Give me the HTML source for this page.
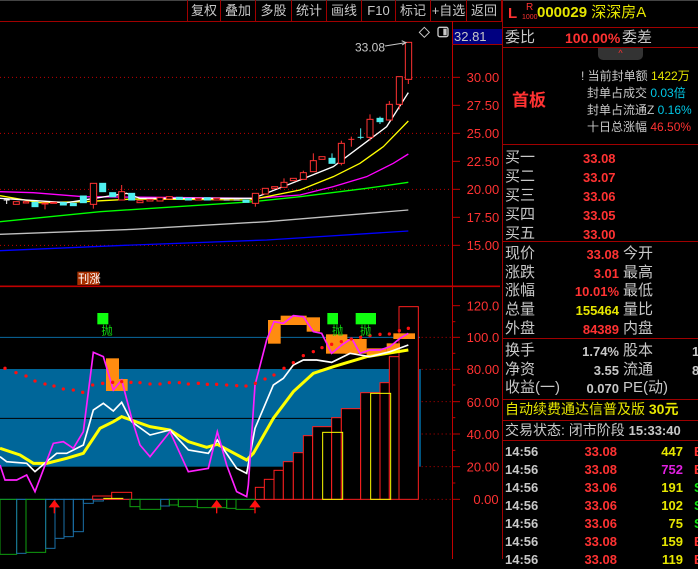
<!DOCTYPE html>
<html><head><meta charset="utf-8"><style>
*{margin:0;padding:0;box-sizing:border-box}
body{width:698px;height:559px;background:#000;overflow:hidden;position:relative;font-family:"Liberation Sans","Noto Sans CJK SC",sans-serif;color:#c8c8c8}
.a{position:absolute;white-space:nowrap;line-height:1}
.btn{position:absolute;top:0;height:21px;border-right:1px solid #a00000;font-size:13px;color:#c8c8c8;text-align:center;line-height:22px}
.r{color:#ff3232}.y{color:#e6e600}.c{color:#00c8e6}.w{color:#c8c8c8}
.hl{position:absolute;height:1px;background:#a00000}
.p14{font-size:15px}
.b{font-weight:bold}
</style></head><body>
<div class="hl" style="left:0;top:0;width:698px;background:#444"></div>
<div class="btn" style="left:187px;width:34px;border-left:1px solid #a00000">复权</div>
<div class="btn" style="left:221px;width:35px">叠加</div>
<div class="btn" style="left:256px;width:36px">多股</div>
<div class="btn" style="left:292px;width:35px">统计</div>
<div class="btn" style="left:327px;width:35px">画线</div>
<div class="btn" style="left:362px;width:34px">F10</div>
<div class="btn" style="left:396px;width:35px">标记</div>
<div class="btn" style="left:431px;width:36px">+自选</div>
<div class="btn" style="left:467px;width:35px">返回</div>
<div class="hl" style="left:0;top:21px;width:502px"></div>
<div style="position:absolute;left:502px;top:0;width:1px;height:559px;background:#a00000"></div>
<div style="position:absolute;left:452px;top:21px;width:1px;height:538px;background:#c00000"></div>
<div style="position:absolute;left:453px;top:29px;width:49px;height:15px;background:#000080;color:#c8c8c8;font-size:13px;line-height:15px;padding-left:1px">32.81</div>
<div class="hl" style="left:452px;top:44px;width:50px"></div>

<svg style="position:absolute;left:0;top:20px" width="500" height="270" viewBox="0 0 1500 810">
<g stroke="#c00000" stroke-width="3" stroke-dasharray="3,9">
<line x1="0" y1="172" x2="1356" y2="172"/><line x1="0" y1="340" x2="1356" y2="340"/><line x1="0" y1="508" x2="1356" y2="508"/><line x1="0" y1="676" x2="1356" y2="676"/>
</g>
<g stroke="#c00000" stroke-width="3">
<line x1="1356" y1="172" x2="1380" y2="172"/><line x1="1356" y1="256" x2="1380" y2="256"/><line x1="1356" y1="340" x2="1380" y2="340"/><line x1="1356" y1="424" x2="1380" y2="424"/><line x1="1356" y1="508" x2="1380" y2="508"/><line x1="1356" y1="592" x2="1380" y2="592"/><line x1="1356" y1="676" x2="1380" y2="676"/>
<line x1="0" y1="800" x2="1500" y2="800"/>
</g>
<g fill="#ff3232" font-size="39" font-family="Liberation Sans,sans-serif">
<text x="1400" y="186">30.00</text><text x="1400" y="270">27.50</text><text x="1400" y="354">25.00</text><text x="1400" y="438">22.50</text><text x="1400" y="522">20.00</text><text x="1400" y="606">17.50</text><text x="1400" y="690">15.00</text>
</g>
<g fill="none" stroke-width="4">
<polyline stroke="#0000ff" points="0,692 400,675 800,660 1225,633"/>
<polyline stroke="#c0c0c0" points="0,643 400,628 800,605 1225,570"/>
<polyline stroke="#00ff00" points="0,605 300,575 760,545 900,530 1100,505 1225,487"/>
<polyline stroke="#ff00ff" points="0,515 100,518 250,530 760,535 900,525 1000,500 1100,470 1180,430 1225,402"/>
<polyline stroke="#ffff00" points="0,527 120,548 250,545 400,537 750,540 900,510 1000,470 1080,430 1150,380 1225,303"/>
<polyline stroke="#ffffff" points="0,535 200,548 380,520 420,535 760,535 900,480 1000,440 1100,365 1160,320 1225,218"/>
</g>
<g stroke-width="3">
<g stroke="#ff3232" fill="#000">
<rect x="40" y="545" width="18" height="8"/><rect x="70" y="545" width="16" height="4"/><line x1="135" y1="550" x2="135" y2="568"/><rect x="126" y="549" width="18" height="3"/><rect x="152" y="547" width="18" height="3"/>
<line x1="280" y1="553" x2="280" y2="566"/><rect x="271" y="490" width="19" height="63"/>
<line x1="365" y1="495" x2="365" y2="515"/><rect x="356" y="515" width="18" height="25"/>
<rect x="411" y="542" width="18" height="6"/><rect x="441" y="538" width="18" height="5"/><rect x="471" y="533" width="18" height="10"/><rect x="499" y="530" width="18" height="7"/><rect x="586" y="535" width="18" height="5"/><rect x="641" y="535" width="18" height="5"/>
<line x1="766" y1="550" x2="766" y2="560"/><rect x="757" y="520" width="19" height="30"/>
<rect x="787" y="505" width="18" height="17"/><rect x="815" y="500" width="18" height="5"/>
<line x1="852" y1="475" x2="852" y2="487"/><rect x="843" y="487" width="18" height="15"/>
<rect x="871" y="475" width="18" height="7"/><line x1="910" y1="452" x2="910" y2="458"/><rect x="901" y="458" width="18" height="20"/>
<line x1="940" y1="400" x2="940" y2="422"/><rect x="931" y="422" width="18" height="33"/>
<rect x="957" y="410" width="18" height="8"/>
<line x1="1024" y1="362" x2="1024" y2="436"/><rect x="1015" y="370" width="18" height="60"/>
<line x1="1054" y1="350" x2="1054" y2="380"/><line x1="1045" y1="358" x2="1063" y2="358"/>
<line x1="1110" y1="283" x2="1110" y2="362"/><rect x="1101" y="298" width="18" height="54"/>
<line x1="1168" y1="243" x2="1168" y2="253"/><rect x="1159" y="253" width="18" height="47"/>
<line x1="1198" y1="253" x2="1198" y2="268"/><rect x="1189" y="170" width="18" height="83"/>
<line x1="1225" y1="178" x2="1225" y2="192"/><rect x="1216" y="67" width="19" height="111"/>
</g>
<g stroke="#50f0f0" fill="#50f0f0">
<rect x="96" y="547" width="18" height="13"/><rect x="181" y="548" width="18" height="7"/><rect x="211" y="550" width="18" height="7"/><rect x="241" y="528" width="18" height="20"/><rect x="299" y="490" width="18" height="25"/><rect x="329" y="518" width="18" height="12"/><rect x="386" y="520" width="18" height="20"/><rect x="529" y="532" width="18" height="6"/><rect x="556" y="535" width="18" height="5"/><rect x="613" y="533" width="18" height="7"/><rect x="729" y="540" width="18" height="7"/>
<line x1="996" y1="400" x2="996" y2="430"/><rect x="987" y="415" width="18" height="15"/>
<line x1="1082" y1="325" x2="1082" y2="358"/><line x1="1073" y1="352" x2="1091" y2="352"/>
<line x1="1140" y1="290" x2="1140" y2="312"/><rect x="1131" y="295" width="18" height="10"/>
</g>
<g stroke="#fff"><line x1="11" y1="540" x2="29" y2="540"/><line x1="20" y1="540" x2="20" y2="552"/><line x1="671" y1="540" x2="689" y2="540"/><line x1="701" y1="540" x2="719" y2="540"/></g>
</g>
<text x="1065" y="95" fill="#c8c8c8" font-size="36" font-family="Liberation Sans,sans-serif">33.08</text>
<polyline points="1155,78 1218,68" stroke="#c8c8c8" stroke-width="3" fill="none"/><polyline points="1205,62 1218,68 1206,75" stroke="#c8c8c8" stroke-width="3" fill="none"/>
<path d="M1273,22 L1288,37 L1273,52 L1258,37 Z" fill="none" stroke="#c8c8c8" stroke-width="3"/>
<rect x="1314" y="22" width="30" height="28" rx="5" fill="none" stroke="#c8c8c8" stroke-width="4"/><rect x="1330" y="26" width="10" height="20" fill="#c8c8c8"/>
<rect x="232" y="755" width="66" height="40" fill="#a83000"/>
<text x="234" y="788" fill="#fff" font-size="34" font-family="Noto Sans CJK SC,sans-serif">刊涨</text>
</svg>

<svg style="position:absolute;left:0;top:285px" width="500" height="274" viewBox="0 0 1500 822">
<rect x="0" y="252" width="1168" height="293" fill="#006699"/>
<line x1="0" y1="157" x2="1260" y2="157" stroke="#0a6aa0" stroke-width="3"/>
<line x1="0" y1="400" x2="1168" y2="400" stroke="#000" stroke-width="3"/>
<line x1="1260" y1="252" x2="1260" y2="545" stroke="#006699" stroke-width="5"/>
<line x1="0" y1="643" x2="800" y2="643" stroke="#0a6aa0" stroke-width="3"/>
<g stroke="#c00000" stroke-width="3" stroke-dasharray="3,9">
<line x1="1265" y1="157" x2="1356" y2="157"/><line x1="1265" y1="253" x2="1356" y2="253"/><line x1="1265" y1="350" x2="1356" y2="350"/><line x1="1265" y1="447" x2="1356" y2="447"/><line x1="1265" y1="545" x2="1356" y2="545"/><line x1="1265" y1="643" x2="1356" y2="643"/>
</g>
<line x1="0" y1="3" x2="1500" y2="3" stroke="#c00000" stroke-width="3"/>
<g stroke="#c00000" stroke-width="3">
<line x1="1356" y1="62" x2="1380" y2="62"/><line x1="1356" y1="157" x2="1380" y2="157"/><line x1="1356" y1="253" x2="1380" y2="253"/><line x1="1356" y1="350" x2="1380" y2="350"/><line x1="1356" y1="447" x2="1380" y2="447"/><line x1="1356" y1="545" x2="1380" y2="545"/><line x1="1356" y1="643" x2="1380" y2="643"/>
<line x1="1356" y1="110" x2="1366" y2="110"/><line x1="1356" y1="205" x2="1366" y2="205"/><line x1="1356" y1="300" x2="1366" y2="300"/><line x1="1356" y1="398" x2="1366" y2="398"/><line x1="1356" y1="496" x2="1366" y2="496"/><line x1="1356" y1="594" x2="1366" y2="594"/>
</g>
<g fill="#ff3232" font-size="39" font-family="Liberation Sans,sans-serif">
<text x="1400" y="76">120.0</text><text x="1400" y="171">100.0</text><text x="1400" y="267">80.00</text><text x="1400" y="366">60.00</text><text x="1400" y="462">40.00</text><text x="1400" y="559">20.00</text><text x="1420" y="657">0.00</text>
</g>
<g fill="#000" stroke="#ff2020" stroke-width="3">
<rect x="766" y="607" width="27" height="36"/><rect x="793" y="583" width="29" height="60"/><rect x="822" y="556" width="28" height="87"/><rect x="850" y="530" width="30" height="113"/><rect x="880" y="503" width="30" height="140"/><rect x="910" y="452" width="28" height="191"/><rect x="938" y="425" width="57" height="218"/><rect x="995" y="398" width="29" height="245"/><rect x="1024" y="371" width="58" height="272"/><rect x="1082" y="323" width="58" height="320"/><rect x="1140" y="293" width="28" height="350"/><rect x="1168" y="215" width="29" height="428"/><rect x="1197" y="65" width="58" height="578"/>
</g>
<g fill="none" stroke="#ffff00" stroke-width="3"><rect x="968" y="442" width="60" height="201"/><rect x="1112" y="325" width="60" height="318"/></g>
<g fill="none" stroke-width="3">
<rect x="0" y="643" width="50" height="165" stroke="#10a010"/><rect x="50" y="643" width="28" height="162" stroke="#1a70a8"/><rect x="78" y="643" width="59" height="159" stroke="#10a010"/>
<rect x="137" y="643" width="28" height="147" stroke="#1a70a8"/><rect x="165" y="643" width="27" height="117" stroke="#1a70a8"/><rect x="192" y="643" width="28" height="112" stroke="#1a70a8"/><rect x="220" y="643" width="30" height="97" stroke="#1a70a8"/><rect x="250" y="643" width="30" height="12" stroke="#1a70a8"/><rect x="280" y="643" width="30" height="5" stroke="#1a70a8"/>
<rect x="278" y="633" width="57" height="10" stroke="#ff2020"/><rect x="335" y="622" width="60" height="21" stroke="#ff2020"/><line x1="310" y1="640" x2="370" y2="640" stroke="#ffff00"/>
<rect x="390" y="643" width="30" height="22" stroke="#10a010"/><rect x="420" y="643" width="62" height="30" stroke="#10a010"/><rect x="482" y="643" width="26" height="20" stroke="#1a70a8"/><rect x="508" y="643" width="27" height="17" stroke="#10a010"/><rect x="535" y="643" width="57" height="22" stroke="#10a010"/><rect x="592" y="643" width="88" height="25" stroke="#10a010"/><rect x="680" y="643" width="28" height="27" stroke="#10a010"/><rect x="708" y="643" width="57" height="30" stroke="#10a010"/>
</g>
<g fill="#ff1010" stroke="#ff1010" stroke-width="4">
<path d="M150,665 L163,648 L176,665 Z"/><line x1="163" y1="660" x2="163" y2="685"/>
<path d="M637,665 L650,648 L663,665 Z"/><line x1="650" y1="660" x2="650" y2="685"/>
<path d="M752,665 L765,648 L778,665 Z"/><line x1="765" y1="660" x2="765" y2="685"/>
</g>
<g fill="#ff8c10">
<rect x="318" y="220" width="39" height="98"/><rect x="357" y="282" width="26" height="36"/>
<rect x="804" y="105" width="38" height="71"/><rect x="842" y="92" width="78" height="28"/><rect x="920" y="97" width="40" height="43"/><rect x="978" y="148" width="64" height="58"/><rect x="1035" y="162" width="65" height="44"/><rect x="1100" y="190" width="60" height="20"/><rect x="1160" y="175" width="40" height="25"/><rect x="1180" y="145" width="65" height="17"/>
</g>
<polyline fill="none" stroke="#ffff00" stroke-width="9" points="0,490 60,510 100,535 140,535 200,520 250,505 300,430 340,410 365,395 450,425 510,435 565,470 620,487 652,478 740,525 760,505 820,400 880,320 940,265 1000,245 1100,215 1225,195"/>
<polyline fill="none" stroke="#fff" stroke-width="5" points="0,515 20,530 80,535 105,560 140,530 170,505 200,505 250,480 280,375 310,355 340,378 365,352 395,410 450,450 510,435 565,495 625,505 652,465 710,550 740,565 765,430 820,300 850,280 880,240 910,225 950,225 995,232 1050,205 1110,215 1170,200 1225,180"/>
<polyline fill="none" stroke="#ff20ff" stroke-width="5" points="0,540 15,585 50,585 80,570 105,620 160,475 190,470 220,490 250,440 280,202 310,215 340,315 365,285 395,400 420,480 450,515 510,440 565,560 625,550 652,440 680,540 710,620 740,635 745,600 765,300 800,165 822,110 850,115 880,92 910,95 940,140 965,145 995,205 1025,180 1055,160 1080,205 1110,195 1140,195 1170,185 1200,160 1225,145"/>
<g fill="#ff1010">
<circle cx="15" cy="250" r="5"/><circle cx="48" cy="263" r="5"/><circle cx="78" cy="273" r="5"/><circle cx="105" cy="288" r="5"/><circle cx="135" cy="297" r="5"/><circle cx="162" cy="303" r="5"/><circle cx="190" cy="312" r="5"/><circle cx="220" cy="315" r="5"/><circle cx="248" cy="322" r="5"/><circle cx="278" cy="300" r="5"/><circle cx="308" cy="295" r="5"/><circle cx="338" cy="292" r="5"/><circle cx="365" cy="290" r="5"/><circle cx="393" cy="292" r="5"/><circle cx="420" cy="293" r="5"/><circle cx="450" cy="297" r="5"/><circle cx="480" cy="297" r="5"/><circle cx="508" cy="293" r="5"/><circle cx="538" cy="293" r="5"/><circle cx="565" cy="297" r="5"/><circle cx="595" cy="295" r="5"/><circle cx="622" cy="298" r="5"/><circle cx="650" cy="298" r="5"/><circle cx="680" cy="300" r="5"/><circle cx="710" cy="302" r="5"/><circle cx="738" cy="303" r="5"/><circle cx="766" cy="295" r="5"/><circle cx="795" cy="282" r="5"/><circle cx="822" cy="270" r="5"/><circle cx="852" cy="250" r="5"/><circle cx="880" cy="233" r="5"/><circle cx="910" cy="212" r="5"/><circle cx="940" cy="200" r="5"/><circle cx="966" cy="188" r="5"/><circle cx="995" cy="178" r="5"/><circle cx="1024" cy="170" r="5"/><circle cx="1054" cy="162" r="5"/><circle cx="1082" cy="157" r="5"/><circle cx="1110" cy="152" r="5"/><circle cx="1140" cy="148" r="5"/><circle cx="1168" cy="147" r="5"/><circle cx="1198" cy="137" r="5"/><circle cx="1225" cy="130" r="5"/>
</g>
<g fill="#10ff10"><rect x="292" y="84" width="33" height="34"/><rect x="982" y="84" width="32" height="34"/><rect x="1067" y="84" width="61" height="34"/></g>
<g fill="#10e010" font-size="34" font-family="Noto Sans CJK SC,sans-serif"><text x="304" y="148">抛</text><text x="996" y="148">抛</text><text x="1080" y="148">抛</text></g>
</svg>

<!-- right panel -->
<div class="a r b" style="left:508px;top:6px;font-size:15px">L</div>
<div class="a r" style="left:526px;top:3px;font-size:10px">R</div>
<div class="a r" style="left:522px;top:14px;font-size:7px">1000</div>
<div class="a y b" style="left:537px;top:5px;font-size:15px">000029 <span style="font-weight:normal">深深房A</span></div>
<div class="hl" style="left:502px;top:27px;width:196px"></div>
<div class="a w" style="left:505px;top:30px;font-size:15px">委比</div>
<div class="a r b" style="left:565px;top:31px;font-size:14px">100.00%</div>
<div class="a w" style="left:622px;top:30px;font-size:15px">委差</div>
<div class="hl" style="left:502px;top:47px;width:196px"></div>
<div style="position:absolute;left:598px;top:48px;width:45px;height:12px;background:#333;border-radius:0 0 5px 5px;color:#ff3232;font-size:9px;text-align:center;line-height:10px">^</div>
<div class="a r b" style="left:512px;top:92px;font-size:17px">首板</div>
<div class="a w" style="left:581px;top:70px;font-size:12px">! 当前封单额 <span class="y">1422万</span></div>
<div class="a w" style="left:587px;top:87px;font-size:12px">封单占成交 <span class="c">0.03倍</span></div>
<div class="a w" style="left:587px;top:104px;font-size:12px">封单占流通Z <span class="c">0.16%</span></div>
<div class="a w" style="left:587px;top:121px;font-size:12px">十日总涨幅 <span class="r">46.50%</span></div>
<div class="hl" style="left:502px;top:144px;width:196px"></div>
<div class="a w p14" style="left:505px;top:148px;line-height:19px">买一<br>买二<br>买三<br>买四<br>买五</div>
<div class="a r b" style="left:583px;top:149px;font-size:13px;line-height:19px">33.08<br>33.07<br>33.06<br>33.05<br>33.00</div>
<div class="hl" style="left:502px;top:241px;width:196px"></div>
<div class="a w p14" style="left:505px;top:245px;line-height:18.7px">现价<br>涨跌<br>涨幅<br>总量<br>外盘</div>
<div class="a b" style="left:560px;width:59px;text-align:right;top:246px;font-size:13px;line-height:18.7px"><span class="r">33.08</span><br><span class="r">3.01</span><br><span class="r">10.01%</span><br><span class="y">155464</span><br><span class="r">84389</span></div>
<div class="a w p14" style="left:623px;top:245px;line-height:18.7px">今开<br>最高<br>最低<br>量比<br>内盘</div>
<div class="hl" style="left:502px;top:338px;width:196px"></div>
<div class="a w p14" style="left:505px;top:342px;line-height:18.7px">换手<br>净资<br>收益(一)</div>
<div class="a w b" style="left:560px;width:59px;text-align:right;top:343px;font-size:13px;line-height:18.7px">1.74%<br>3.55<br>0.070</div>
<div class="a w p14" style="left:623px;top:342px;line-height:18.7px">股本<br>流通<br>PE(动)</div>
<div class="a w b" style="left:692px;top:343px;font-size:13px;line-height:18.7px">1<br>8</div>
<div class="hl" style="left:502px;top:399px;width:196px"></div>
<div class="a y" style="left:505px;top:402px;font-size:14px">自动续费通达信普及版 <span class="b">30元</span></div>
<div class="hl" style="left:502px;top:420px;width:196px"></div>
<div class="a w" style="left:505px;top:423px;font-size:14px">交易状态: 闭市阶段 <span class="b" style="font-size:13px">15:33:40</span></div>
<div class="hl" style="left:502px;top:440px;width:196px"></div>
<div class="a w b" style="left:505px;top:443px;font-size:13px;line-height:18px">14:56<br>14:56<br>14:56<br>14:56<br>14:56<br>14:56<br>14:56</div>
<div class="a r b" style="left:560px;width:57px;text-align:right;top:443px;font-size:13px;line-height:18px">33.08<br>33.08<br>33.06<br>33.06<br>33.06<br>33.08<br>33.08</div>
<div class="a b" style="left:640px;width:43px;text-align:right;top:443px;font-size:13px;line-height:18px"><span class="y">447</span><br><span style="color:#e020e0">752</span><br><span class="y">191</span><br><span class="y">102</span><br><span class="y">75</span><br><span class="y">159</span><br><span class="y">119</span></div>
<div class="a b" style="left:694px;top:443px;font-size:13px;line-height:18px"><span class="r">B</span><br><span class="r">B</span><br><span style="color:#10e010">S</span><br><span style="color:#10e010">S</span><br><span style="color:#10e010">S</span><br><span class="r">B</span><br><span class="r">B</span></div>
</body></html>
